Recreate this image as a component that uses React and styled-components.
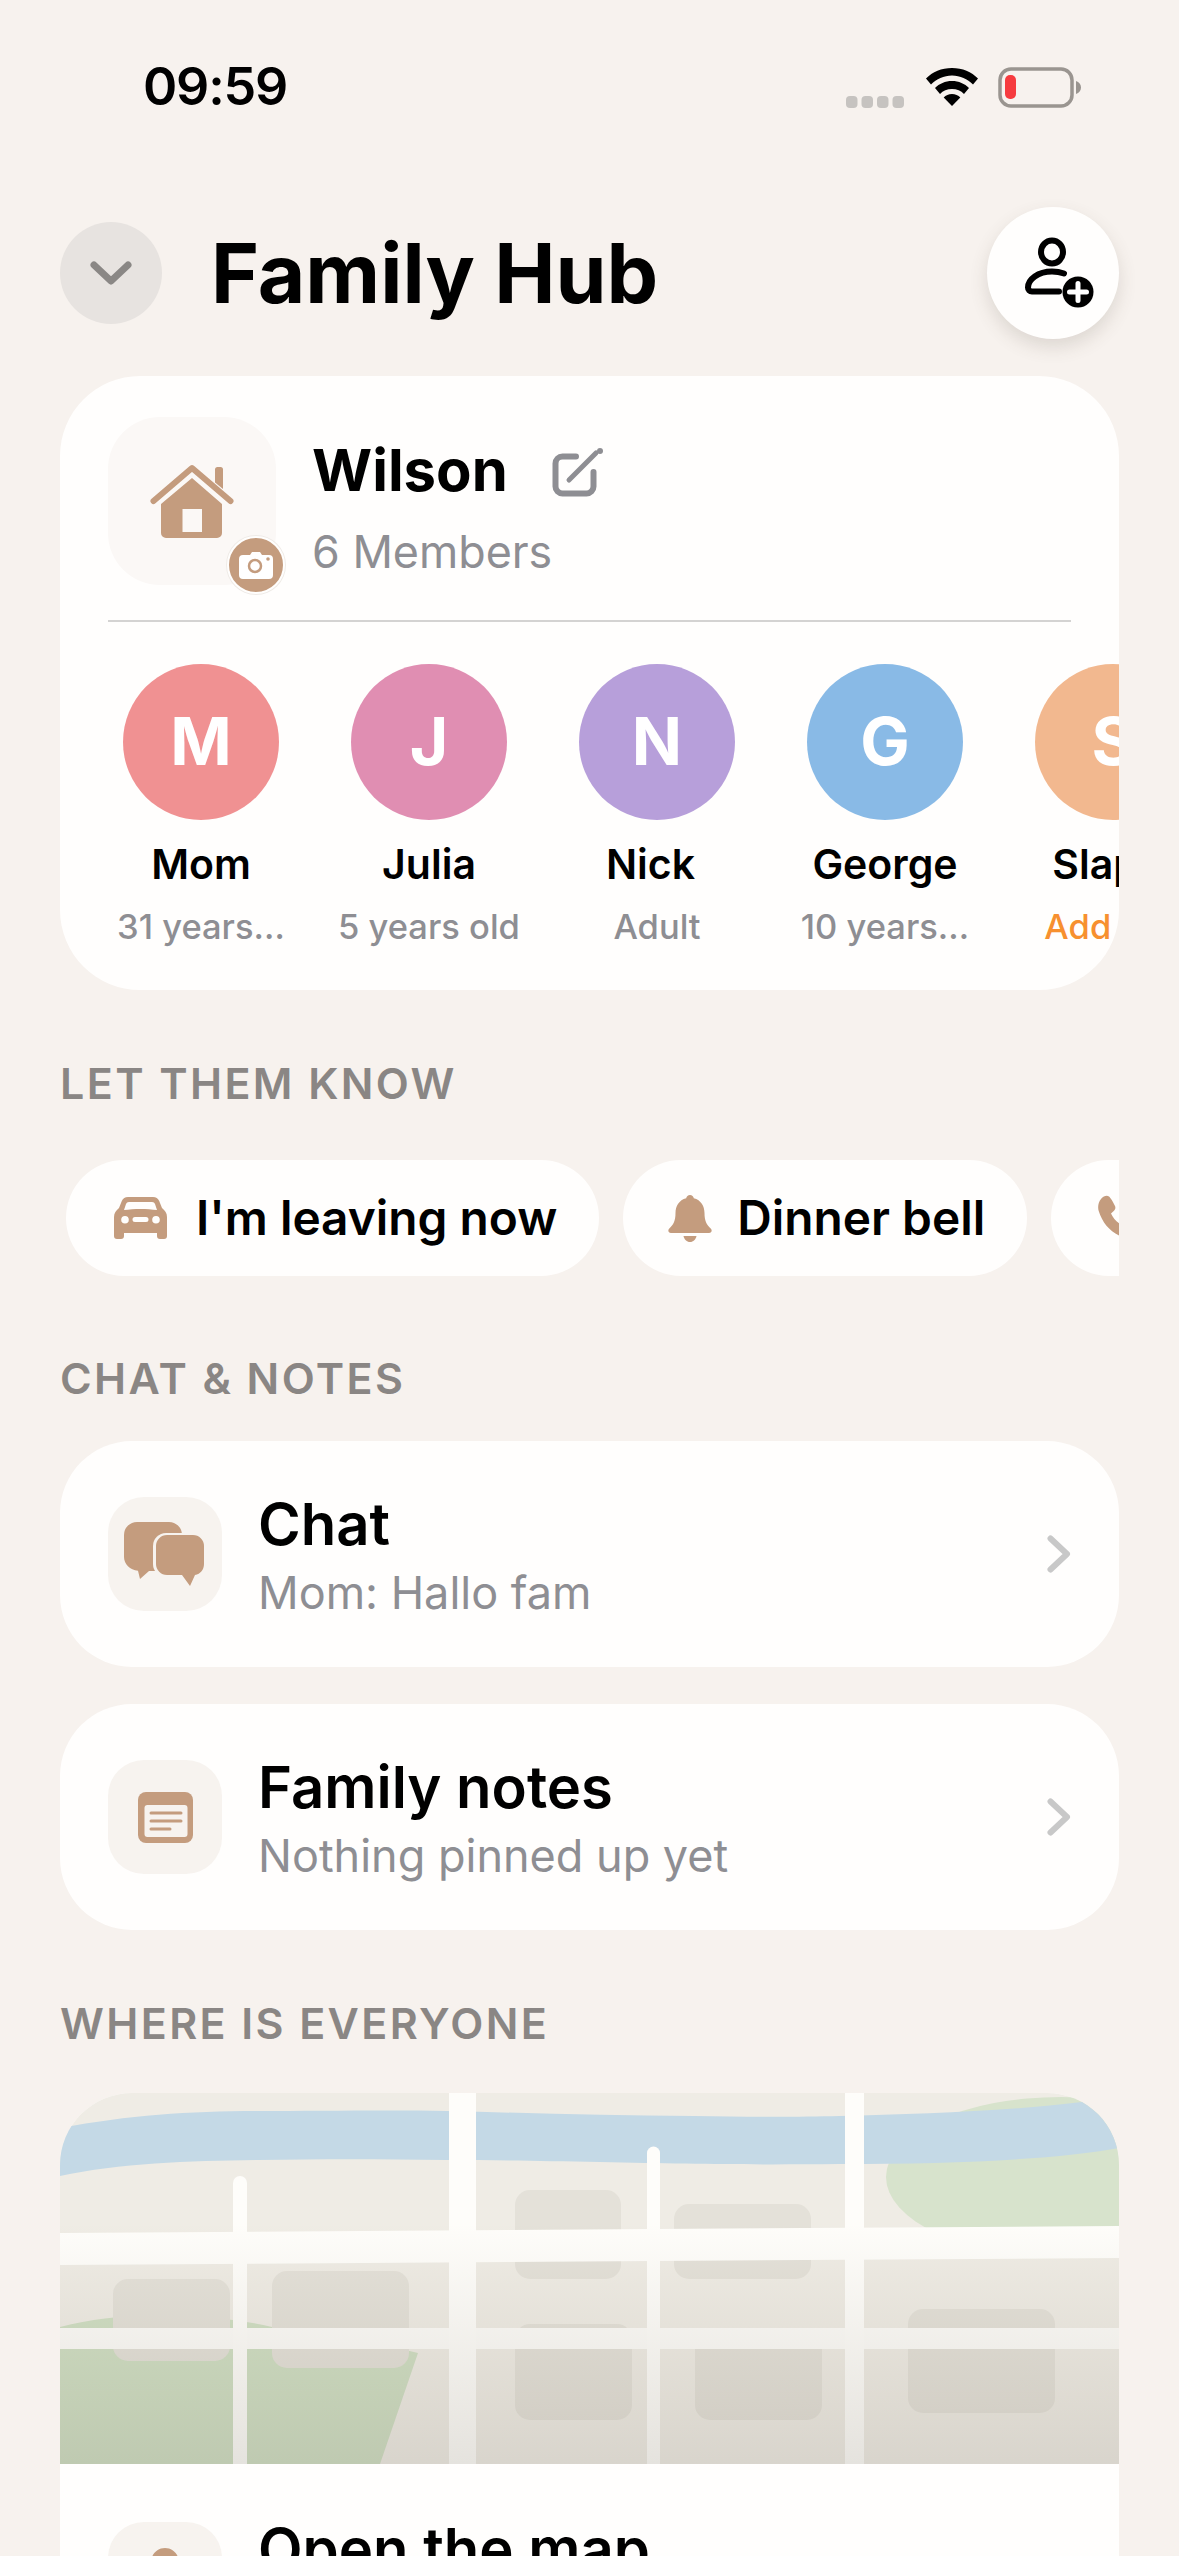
import styled, { createGlobalStyle } from "styled-components"

const tan = "#c49c7e"

const GlobalStyle = createGlobalStyle`
  html, body {
    margin: 0;
    padding: 0;
    background: #f7f2ee;
  }
  * {
    box-sizing: border-box;
  }
`

const Page = styled.div`
  width: 1179px;
  height: 2556px;
  overflow: hidden;
  background: #f7f2ee;
  font-family: Inter, "Noto Sans", sans-serif;
  color: #000;
`

const StatusBar = styled.div`
  height: 177px;
  padding: 60px 95px 0 143px;
  display: flex;
  justify-content: space-between;
  align-items: flex-start;
`

const Time = styled.div`
  font-size: 52px;
  font-weight: 600;
  line-height: 54px;
  letter-spacing: -1.2px;
`

const StatusIcons = styled.div`
  display: flex;
  align-items: flex-start;
  margin-top: 8px;
`

const Content = styled.div`
  padding: 30px 60px 0;
`

const Header = styled.div`
  display: flex;
  align-items: center;
  height: 132px;
  margin-bottom: 37px;
`

const BackCircle = styled.div`
  width: 102px;
  height: 102px;
  border-radius: 50%;
  background: #e7e3e0;
  display: flex;
  align-items: center;
  justify-content: center;
`

const Title = styled.h1`
  flex: 1;
  margin: 0 0 0 49px;
  font-size: 82px;
  font-weight: 700;
`

const AddButton = styled.div`
  width: 132px;
  height: 132px;
  border-radius: 50%;
  background: #fffefd;
  box-shadow: 0 8px 18px rgba(90, 75, 60, 0.16);
  display: flex;
  align-items: center;
  justify-content: center;
  padding-left: 10px;
`

const Card = styled.div`
  background: #fffefd;
  border-radius: 80px;
  overflow: hidden;
`

const FamilyCard = styled(Card)`
  height: 614px;
  padding: 41px 0 0 48px;
`

const FamilyTop = styled.div`
  display: flex;
  align-items: flex-start;
  height: 205px;
  width: 963px;
  border-bottom: 2px solid #d4d3d2;
`

const HomeTile = styled.div`
  position: relative;
  width: 168px;
  height: 168px;
  border-radius: 52px;
  background: #fbf8f6;
  display: flex;
  align-items: center;
  justify-content: center;
  margin-right: 37px;
`

const CameraBadge = styled.div`
  position: absolute;
  right: -9px;
  bottom: -9px;
  width: 58px;
  height: 58px;
  border-radius: 50%;
  background: ${tan};
  border: 2px solid #fffefd;
  box-shadow: 0 0 0 1px #efebe7;
  display: flex;
  align-items: center;
  justify-content: center;
`

const FamilyInfo = styled.div`
  padding-top: 21px;
  margin-left: -1px;
`

const NameRow = styled.div`
  display: flex;
  align-items: center;
  gap: 44px;
`

const FamilyName = styled.div`
  font-size: 58px;
  font-weight: 700;
  line-height: 64px;
`

const EditWrap = styled.div`
  display: flex;
  margin-top: 6px;
`

const MemberCount = styled.div`
  margin-top: 23px;
  font-size: 44.8px;
  font-weight: 400;
  line-height: 54px;
  color: #8e8e93;
`

const Members = styled.div`
  display: flex;
  gap: 42px;
  margin-top: 42px;
`

const Member = styled.div`
  flex: 0 0 186px;
  width: 186px;
  display: flex;
  flex-direction: column;
  align-items: center;
`

const Avatar = styled.div`
  width: 156px;
  height: 156px;
  padding-bottom: 2px;
  border-radius: 50%;
  background: ${(p) => p.$color};
  color: #fff;
  font-size: 66px;
  font-weight: 700;
  display: flex;
  align-items: center;
  justify-content: center;
`

const MemberName = styled.div`
  margin: 19px ${(p) => p.$nudge || 0}px 0 0;
  font-size: 41px;
  font-weight: 600;
  line-height: 50px;
  white-space: nowrap;
`

const MemberSub = styled.div`
  margin-top: 17px;
  font-size: 34.5px;
  font-weight: 500;
  line-height: 42px;
  text-align: center;
  color: ${(p) => (p.$accent ? "#f7902f" : "#8e8e93")};
  white-space: nowrap;
`

const SectionLabel = styled.div`
  margin: ${(p) => p.$top}px 0 ${(p) => p.$bottom}px;
  font-size: 43px;
  font-weight: 600;
  line-height: 52px;
  letter-spacing: 2.4px;
  color: #8a8684;
`

const ChipRow = styled.div`
  display: flex;
  gap: 24px;
  padding-left: 6px;
  overflow: hidden;
`

const Chip = styled.div`
  flex: 0 0 auto;
  height: 116px;
  min-width: ${(p) => p.$min || 0}px;
  padding: 0 42px 0 ${(p) => p.$left}px;
  border-radius: 58px;
  background: #fffefd;
  display: flex;
  align-items: center;
  gap: ${(p) => p.$gap}px;
  font-size: 47.8px;
  font-weight: 600;
  white-space: nowrap;
`

const Row = styled.div`
  height: 226px;
  padding: 56px 48px 0;
  display: flex;
  align-items: flex-start;
  background: #fffefd;
`

const RowCard = styled(Row)`
  border-radius: 72px;
  margin-bottom: ${(p) => p.$gap || 0}px;
`

const MapRow = styled(Row)`
  padding-top: 58px;
`

const RowTile = styled.div`
  flex: 0 0 114px;
  height: 114px;
  border-radius: 36px;
  background: #f7f3ef;
  display: flex;
  align-items: center;
  justify-content: center;
`

const RowText = styled.div`
  flex: 1;
  margin-left: 36px;
`

const RowTitle = styled.div`
  font-size: 58px;
  font-weight: 600;
  line-height: 64px;
  margin-top: -5px;
`

const RowSub = styled.div`
  margin-top: 11px;
  font-size: 45px;
  font-weight: 400;
  line-height: 52px;
  color: #8e8e93;
`

const RowChevron = styled.div`
  align-self: center;
  margin: -56px 0 0 0;
  width: 24px;
  display: flex;
`

const MapCard = styled(Card)`
  border-radius: 72px;
  height: 700px;
`

const MapPicture = styled.svg`
  display: block;
  width: 1059px;
  height: 371px;
`

const Chevron = () => (
  <RowChevron>
    <svg width="24" height="38" viewBox="0 0 24 38" fill="none">
      <path d="M3.5 3.5 20 19 3.5 34.5" stroke="#c8c8c8" strokeWidth="6" strokeLinecap="round" strokeLinejoin="round" />
    </svg>
  </RowChevron>
)

const StatusIconsDrawing = () => (
  <StatusIcons>
    <svg width="58" height="12" viewBox="0 0 58 12" style={{ marginTop: 28, marginRight: 21 }}>
      {[0, 15.5, 31, 46.5].map((x) => (
        <rect key={x} x={x} y="0" width="11.5" height="12" rx="4" fill="#c6c3c0" />
      ))}
    </svg>
    <svg width="54" height="38" viewBox="0 0 54 38" fill="#000">
      <path d="M27 0C16.5 0 7.5 4 1 10.5l5 6C11.5 11 18.8 7.5 27 7.5S42.5 11 48 16.5l5-6C46.500 4 37.500 0 27 0Z" />
      <path d="M27 13c-6.800 0-12.800 2.700-17 7l5 6c3-3.200 7.200-5 12-5s9 1.800 12 5l5-6c-4.200-4.300-10.200-7-17-7Z" />
      <path d="M27 26c-3.300 0-6.300 1.300-8.300 3.500L27 38l8.300-8.500C33.300 27.300 30.300 26 27 26Z" />
    </svg>
    <svg width="86" height="42" viewBox="0 0 86 42" style={{ marginLeft: 19, marginTop: -1 }}>
      <rect x="2" y="2" width="72" height="37" rx="11" fill="none" stroke="#9a9590" strokeWidth="3.500" />
      <rect x="7" y="8" width="11" height="24" rx="5" fill="#f63b3f" />
      <path d="M78 14c3 1 5 3.500 5 6.500S81 26 78 27Z" fill="#9a9590" />
    </svg>
  </StatusIcons>
)

const HomeIcon = () => (
  <svg width="84" height="74" viewBox="0 0 84 74" fill={tan}>
    <path d="M65 5.500a2.500 2.500 0 0 1 2.500-2.500h3a2.500 2.500 0 0 1 2.500 2.500V25l-8-6.500Z" />
    <path d="M3.500 37 42 4l38.500 33" fill="none" stroke={tan} strokeWidth="6" strokeLinecap="round" strokeLinejoin="round" />
    <path fillRule="evenodd" d="M42 14 72 40v29a5 5 0 0 1-5 5H16a5 5 0 0 1-5-5V40ZM32.500 45v23H52V45Z" />
  </svg>
)

const CameraIcon = () => (
  <svg width="34" height="28" viewBox="0 0 34 28">
    <path d="M4 4h7l2-3h8l2 3h7a4 4 0 0 1 4 4v16a4 4 0 0 1-4 4H4a4 4 0 0 1-4-4V8a4 4 0 0 1 4-4Z" fill="#fff" />
    <circle cx="16" cy="15" r="6" fill="none" stroke={tan} strokeWidth="2.500" />
    <circle cx="29" cy="8" r="1.800" fill={tan} />
  </svg>
)

const EditIcon = () => (
  <EditWrap>
    <svg width="52" height="50" viewBox="0 0 52 50" fill="none">
      <path d="M24 8.500H10.500a7 7 0 0 0-7 7v23a7 7 0 0 0 7 7h24a7 7 0 0 0 7-7V24" stroke="#8e8e93" strokeWidth="6" strokeLinecap="round" />
      <path d="M17 32 44 5" stroke="#8e8e93" strokeWidth="5" strokeLinecap="round" />
      <circle cx="48" cy="3" r="3" fill="#8e8e93" />
    </svg>
  </EditWrap>
)

const AddUserIcon = () => (
  <svg width="76" height="76" viewBox="0 0 76 76" fill="none">
    <ellipse cx="32" cy="17" rx="11" ry="11.500" stroke="#000" strokeWidth="6" />
    <path d="M44 38.500c-3.500-1.300-7.500-2-12-2-14 0-24 8-24 16 0 2.500 1.600 4 4 4h27" stroke="#000" strokeWidth="6" strokeLinecap="round" />
    <circle cx="58" cy="57" r="15.500" fill="#000" />
    <path d="M58 48.500v17M49.500 57h17" stroke="#fff" strokeWidth="5" strokeLinecap="round" />
  </svg>
)

const CarIcon = () => (
  <svg width="53" height="42" viewBox="0 0 53 42">
    <path
      fillRule="evenodd"
      fill={tan}
      d="M14 0h25c3 0 5 1.500 6.200 4L48 11c3 2.500 5 5 5 9v19a3 3 0 0 1-3 3h-4a3 3 0 0 1-3-3v-3H10v3a3 3 0 0 1-3 3H3a3 3 0 0 1-3-3V20c0-4 2-6.500 5-9l2.800-7C9 1.500 11 0 14 0Zm1 5c-1.500 0-2.500.8-3 2l-2 6c10-1.500 23-1.500 33 0l-2-6c-.5-1.200-1.500-2-3-2ZM11 19a3.800 3.800 0 1 0 0 7.600A3.800 3.800 0 0 0 11 19Zm31 0a3.800 3.800 0 1 0 0 7.600 3.800 3.800 0 0 0 0-7.600Zm-21 1a2.500 2.500 0 0 0 0 5h11a2.500 2.500 0 0 0 0-5Z"
    />
  </svg>
)

const BellIcon = () => (
  <svg width="44" height="47" viewBox="0 0 44 47" fill={tan}>
    <path d="M22 0c2 0 3.500 1.300 3.800 3.200C33 5 36.500 11 36.500 18c0 8 2 11.500 6.200 15.500 1.800 1.700 1 4.500-1.700 4.500H3c-2.700 0-3.500-2.800-1.700-4.500C5.500 29.500 7.500 26 7.500 18c0-7 3.500-13 10.700-14.800C18.500 1.300 20 0 22 0Z" />
    <path d="M15.500 41h13c-.6 3.400-3.300 6-6.500 6s-5.900-2.600-6.500-6Z" />
  </svg>
)

const PhoneIcon = () => (
  <svg width="46" height="46" viewBox="0 0 46 46" fill={tan}>
    <path d="M4 4C6.500 1 10 0 12 1.500c1.300 1 4.500 6 6 9.500.8 1.800.3 3.400-1 4.700l-3 2.800c2.500 5.500 7 10 12.500 12.500l2.800-3c1.300-1.300 2.900-1.800 4.700-1 3.500 1.500 8.500 4.700 9.500 6 1.500 2 .5 5.500-2.500 8-3.200 2.700-7 3.500-11 2.300C16 40 6 30 1.700 16 .5 12 1.300 7.200 4 4Z" />
  </svg>
)

const ChatIcon = () => (
  <svg width="82" height="64" viewBox="0 0 82 64" fill={tan}>
    <path d="M13 0h32a13 13 0 0 1 13 13v23a13 13 0 0 1-13 13H25l-9 8-2-8.300C6 48 0 42 0 35V13A13 13 0 0 1 13 0Z" />
    <rect x="29" y="11" width="53" height="44" rx="13" fill="#f7f3ef" />
    <path d="M43 13h26a11 11 0 0 1 11 11v18c0 5.500-3.500 10-9 11l-5 11-8-11H43a11 11 0 0 1-11-11V24a11 11 0 0 1 11-11Z" />
  </svg>
)

const NotesIcon = () => (
  <svg width="55" height="51" viewBox="0 0 55 51">
    <rect width="55" height="51" rx="8" fill={tan} />
    <rect x="6.500" y="13" width="43" height="32" rx="3" fill="#f7f3ef" />
    <path d="M13 21h30M13 29h30M13 37h19" stroke={tan} strokeWidth="3" strokeLinecap="round" />
  </svg>
)

const PinIcon = () => (
  <svg width="34" height="62" viewBox="0 0 34 62" fill={tan}>
    <path fillRule="evenodd" d="M17 0c8 0 14 6.500 14 14.500 0 10-8 26-14 47.500C11 40.500 3 24.500 3 14.500 3 6.500 9 0 17 0Zm0 8a6 6 0 1 0 0 12 6 6 0 0 0 0-12Z" />
  </svg>
)

const blocks = [
  [53, 186, 117, 82],
  [212, 178, 137, 97],
  [455, 97, 106, 89],
  [614, 111, 137, 75],
  [455, 231, 117, 96],
  [635, 236, 127, 91],
  [848, 216, 147, 104],
]

const MapDrawing = () => (
  <MapPicture viewBox="0 0 1059 371">
    <defs>
      <linearGradient id="shade" x1="0" y1="0" x2="0" y2="1">
        <stop offset="0.35" stopColor="#6b5f45" stopOpacity="0" />
        <stop offset="1" stopColor="#6b6355" stopOpacity="0.17" />
      </linearGradient>
    </defs>
    <rect width="1059" height="371" fill="#efece5" />
    <ellipse cx="1001" cy="84" rx="175" ry="80" fill="#d7e3cc" />
    <path d="M0 234C30 226 60 223 90 223C140 223 180 226 212 234C270 242 320 250 358 260L320 371H0Z" fill="#d0dfc4" />
    <path d="M0 35C70 22 130 18 198 18C260 18 330 17 387 18C470 20 550 23 634 23C690 24 740 24 779 23C860 21 950 18 1022 9L1059 0V55C1000 66 900 71 779 71C690 72 630 71 540 69C480 68 430 67 387 67C320 66 260 66 198 67C130 68 60 70 0 83Z" fill="#c4d9e6" />
    {blocks.map(([x, y, w, h]) => (
      <rect key={x} x={x} y={y} width={w} height={h} rx="15" fill="#e4e1d9" />
    ))}
    <path d="M0 140 1059 133V165L0 172Z" fill="#fefdfa" />
    <rect y="235" width="1059" height="21" fill="#fdfcf9" />
    <path d="M173 90a7 7 0 0 1 14 0V371H173Z" fill="#fefdfa" />
    <rect x="389" width="27" height="371" fill="#fefdfa" />
    <path d="M587 60a6.500 6.500 0 0 1 13 0V371H587Z" fill="#fefdfa" />
    <rect x="785" width="19" height="371" fill="#fefdfa" />
    <rect width="1059" height="371" fill="url(#shade)" />
  </MapPicture>
)

const people = [
  { letter: "M", name: "Mom", sub: "31 years…", color: "#f09192" },
  { letter: "J", name: "Julia", sub: "5 years old", color: "#e08eb2" },
  { letter: "N", name: "Nick", sub: "Adult", color: "#b79fda", nudge: 13 },
  { letter: "G", name: "George", sub: "10 years…", color: "#89bae6" },
  { letter: "S", name: "Slappy", sub: "Add age", color: "#f2b88f", accent: true, nudge: -14 },
]

const App = () => {
  return (
    <Page>
      <GlobalStyle />
      <StatusBar>
        <Time>09:59</Time>
        <StatusIconsDrawing />
      </StatusBar>
      <Content>
        <Header>
          <BackCircle>
            <svg width="42" height="24" viewBox="0 0 42 24" fill="none">
              <path d="M4 4 21 20 38 4" stroke="#8a8785" strokeWidth="7" strokeLinecap="round" strokeLinejoin="round" />
            </svg>
          </BackCircle>
          <Title>Family Hub</Title>
          <AddButton>
            <AddUserIcon />
          </AddButton>
        </Header>

        <FamilyCard>
          <FamilyTop>
            <HomeTile>
              <HomeIcon />
              <CameraBadge>
                <CameraIcon />
              </CameraBadge>
            </HomeTile>
            <FamilyInfo>
              <NameRow>
                <FamilyName>Wilson</FamilyName>
                <EditIcon />
              </NameRow>
              <MemberCount>6 Members</MemberCount>
            </FamilyInfo>
          </FamilyTop>
          <Members>
            {people.map((p) => (
              <Member key={p.name}>
                <Avatar $color={p.color}>{p.letter}</Avatar>
                <MemberName $nudge={p.nudge}>{p.name}</MemberName>
                <MemberSub $accent={p.accent}>{p.sub}</MemberSub>
              </Member>
            ))}
          </Members>
        </FamilyCard>

        <SectionLabel $top={67} $bottom={51}>LET THEM KNOW</SectionLabel>
        <ChipRow>
          <Chip $left={48} $gap={29}>
            <CarIcon />
            I'm leaving now
          </Chip>
          <Chip $left={45} $gap={25}>
            <BellIcon />
            Dinner bell
          </Chip>
          <Chip $left={46} $gap={0} $min={200}>
            <PhoneIcon />
          </Chip>
        </ChipRow>

        <SectionLabel $top={76} $bottom={37}>CHAT &amp; NOTES</SectionLabel>
        <RowCard $gap={37}>
          <RowTile>
            <ChatIcon />
          </RowTile>
          <RowText>
            <RowTitle>Chat</RowTitle>
            <RowSub>Mom: Hallo fam</RowSub>
          </RowText>
          <Chevron />
        </RowCard>
        <RowCard>
          <RowTile>
            <NotesIcon />
          </RowTile>
          <RowText>
            <RowTitle>Family notes</RowTitle>
            <RowSub>Nothing pinned up yet</RowSub>
          </RowText>
          <Chevron />
        </RowCard>

        <SectionLabel $top={67} $bottom={44}>WHERE IS EVERYONE</SectionLabel>
        <MapCard>
          <MapDrawing />
          <MapRow>
            <RowTile>
              <PinIcon />
            </RowTile>
            <RowText>
              <RowTitle>Open the map</RowTitle>
            </RowText>
          </MapRow>
        </MapCard>
      </Content>
    </Page>
  )
}

export default App
